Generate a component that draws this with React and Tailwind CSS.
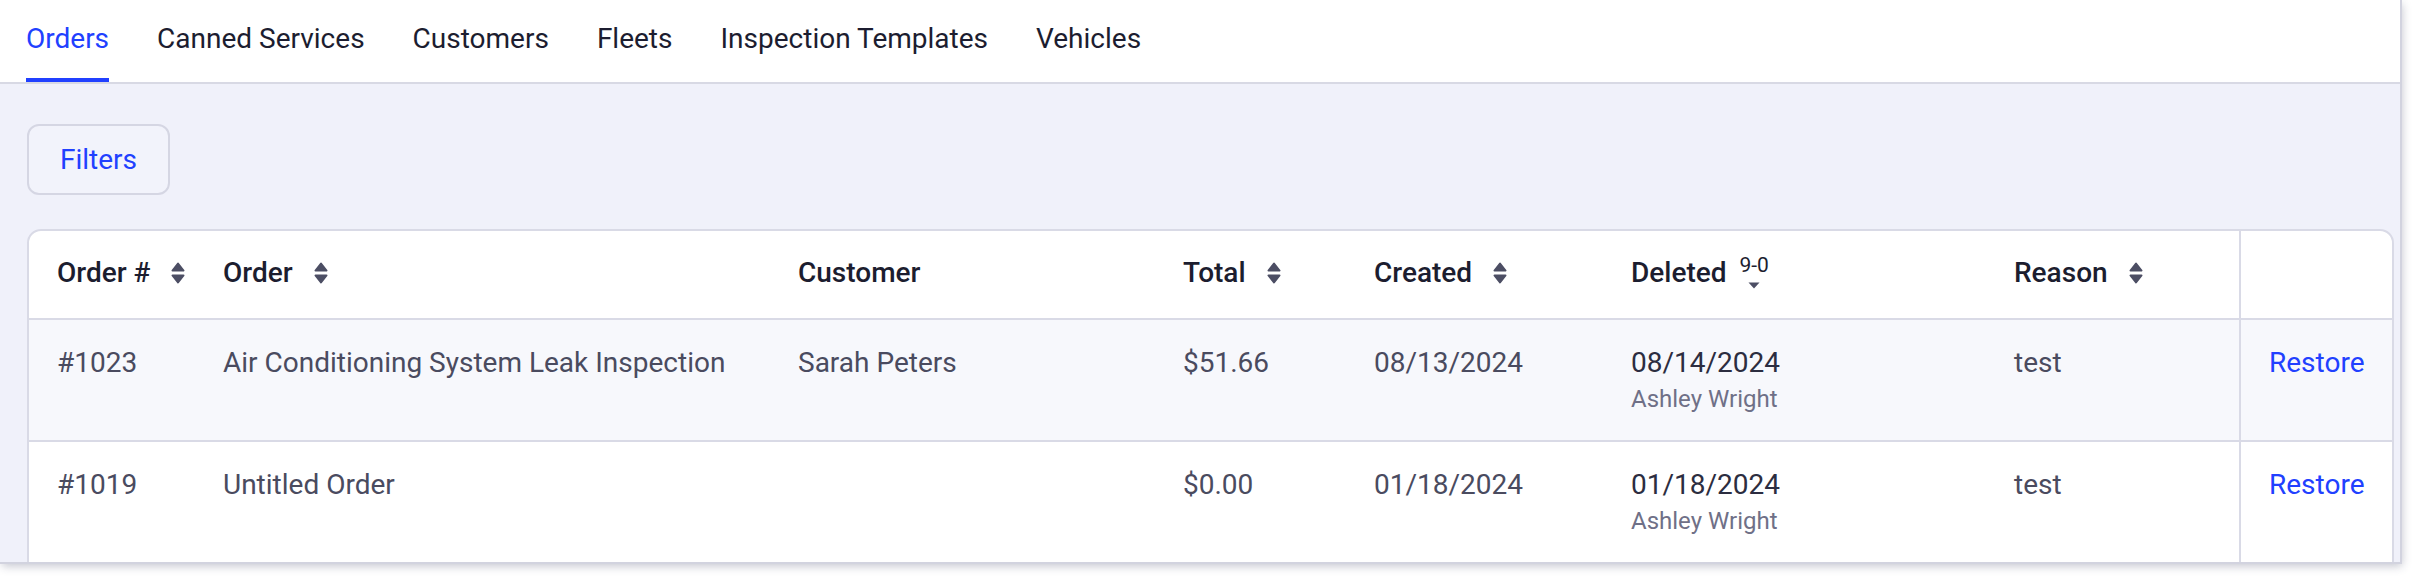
import React from 'react';

const tabs = ['Orders', 'Canned Services', 'Customers', 'Fleets', 'Inspection Templates', 'Vehicles'];

const columns = [
  { label: 'Order #', sortable: true },
  { label: 'Order', sortable: true },
  { label: 'Customer' },
  { label: 'Total', sortable: true },
  { label: 'Created', sortable: true },
  { label: 'Deleted', sortedBy: '9-0' },
  { label: 'Reason', sortable: true },
  { label: '' },
];

const deletedOrders = [
  {
    number: '#1023',
    title: 'Air Conditioning System Leak Inspection',
    customer: 'Sarah Peters',
    total: '$51.66',
    created: '08/13/2024',
    deleted: '08/14/2024',
    deletedBy: 'Ashley Wright',
    reason: 'test',
  },
  {
    number: '#1019',
    title: 'Untitled Order',
    customer: '',
    total: '$0.00',
    created: '01/18/2024',
    deleted: '01/18/2024',
    deletedBy: 'Ashley Wright',
    reason: 'test',
  },
];

const gridCols = 'grid grid-cols-[166px_575px_385px_191px_257px_383px_255px_151px]';

const SortIcon = () => (
  <svg width="14" height="22" viewBox="0 0 14 22" fill="currentColor" className="shrink-0 text-[#4c4e64]">
    <path d="M7 1.5 L12.5 8.5 H1.5 Z" stroke="currentColor" strokeWidth="2" strokeLinejoin="round" />
    <path d="M1.5 13.5 H12.5 L7 20.5 Z" stroke="currentColor" strokeWidth="2" strokeLinejoin="round" />
  </svg>
);

const SortedDown = ({ label }) => (
  <span className="ml-[13px] mb-[2px] flex flex-col items-center">
    <span className="text-[21px] leading-[18px] font-normal text-[#1c1d2f]">{label}</span>
    <svg width="12" height="7" viewBox="0 0 12 7" fill="currentColor" className="mt-[8px] text-[#4c4e64]">
      <path d="M0.5 0.5 H11.5 L6 6.5 Z" />
    </svg>
  </span>
);

const App = () => {
  return (
    <div className="h-[584px] w-[2420px] bg-white font-['Roboto',sans-serif]">
      <div className="flex h-[562px] w-[2400px] flex-col overflow-hidden bg-[#f0f1fa] shadow-[0_0_0_2px_#d2d3df,2px_4px_9px_rgba(40,44,80,0.28)]">
        {/* tab bar */}
        <nav className="flex h-[84px] shrink-0 gap-[48px] border-b-2 border-[#d8d9e4] bg-white pl-[26px]">
          {tabs.map((tab, i) => (
            <div
              key={tab}
              className={`flex h-[82px] items-center border-b-4 text-[28px] leading-[40px] ${
                i === 0 ? 'border-[#2140ff] text-[#2140ff]' : 'border-transparent text-[#1c1d30]'
              }`}
            >
              {tab}
            </div>
          ))}
        </nav>

        <main className="pl-[27px] pt-[40px]">
          <button className="h-[71px] rounded-[12px] border-2 border-[#d5d6e3] bg-[#f2f3fb] px-[31px] text-[28px] leading-[40px] text-[#2140ff]">
            Filters
          </button>

          <div className="mt-[34px] w-[2367px] overflow-hidden rounded-t-[14px] border-2 border-[#d9dae6] bg-white">
            {/* header */}
            <div className={`${gridCols} h-[89px] border-b-2 border-[#d9dae6]`}>
              {columns.map((col, i) => (
                <div
                  key={i}
                  className={`flex items-center pb-[3px] pl-[28px] text-[28px] leading-[40px] font-medium text-[#1c1d2f] ${
                    i === 6 ? 'border-r-2 border-[#d9dae6]' : ''
                  }`}
                >
                  <span>{col.label}</span>
                  {col.sortable && (
                    <span className="ml-[21px] flex">
                      <SortIcon />
                    </span>
                  )}
                  {col.sortedBy && <SortedDown label={col.sortedBy} />}
                </div>
              ))}
            </div>

            {/* rows */}
            {deletedOrders.map((row, idx) => (
              <div
                key={row.number}
                className={`${gridCols} h-[122px] border-b-2 border-[#d9dae6] text-[28px] leading-[40px] text-[#4a4b5f] ${
                  idx === 0 ? 'bg-[#f7f8fc]' : 'bg-white'
                }`}
              >
                <div className="pl-[28px] pt-[23px]">{row.number}</div>
                <div className="pl-[28px] pt-[23px]">{row.title}</div>
                <div className="pl-[28px] pt-[23px]">{row.customer}</div>
                <div className="pl-[28px] pt-[23px]">{row.total}</div>
                <div className="pl-[28px] pt-[23px]">{row.created}</div>
                <div className="flex flex-col pl-[28px] pt-[23px]">
                  <span className="text-[#2c2d40]">{row.deleted}</span>
                  <span className="text-[24px] leading-[32px] text-[#6f7087]">{row.deletedBy}</span>
                </div>
                <div className="border-r-2 border-[#d9dae6] pl-[28px] pt-[23px]">{row.reason}</div>
                <div className="pl-[28px] pt-[23px]">
                  <a className="cursor-pointer text-[#2140ff]">Restore</a>
                </div>
              </div>
            ))}
          </div>
        </main>
      </div>
    </div>
  );
};

export default App;
